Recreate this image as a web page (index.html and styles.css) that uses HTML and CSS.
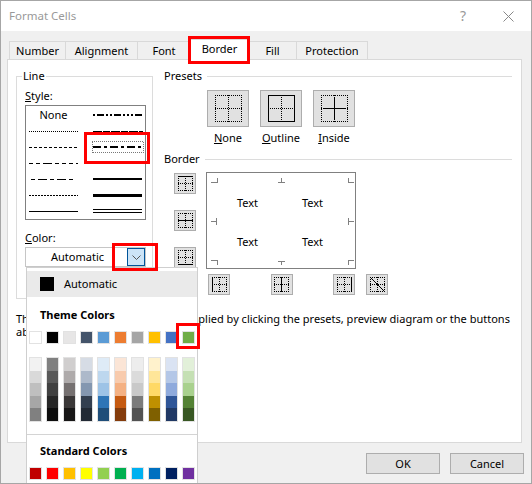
FILE: index.html
```html
<!DOCTYPE html>
<html lang="en">
<head>
<meta charset="utf-8">
<title>Format Cells</title>
<link rel="stylesheet" href="styles.css">
</head>
<body>
<svg class="defs" width="0" height="0" aria-hidden="true">
  <symbol id="g27" viewBox="0 0 27 27"><path class="dot" d="M0 .5H27M0 26.5H27M.5 0V27M26.5 0V27M13.5 0V27M0 13.5H27"/></symbol>
  <symbol id="g15" viewBox="0 0 15 15"><path class="dot" d="M0 .5H15M0 14.5H15M.5 0V15M14.5 0V15M7.5 0V15M0 7.5H15"/></symbol>
</svg>
<main class="dialog">
  <header class="titlebar">
    <span class="title">Format Cells</span>
    <span class="help">?</span>
    <svg class="close" width="11" height="11" viewBox="0 0 11 11"><path d="M.5 .5L10.5 10.5M10.5 .5L.5 10.5"/></svg>
  </header>
  <nav class="tabs">
    <span class="tab t-number">Number</span>
    <span class="tab t-align">Alignment</span>
    <span class="tab t-font">Font</span>
    <span class="tab t-border active">Border</span>
    <span class="tab t-fill">Fill</span>
    <span class="tab t-prot">Protection</span>
  </nav>
  <section class="panel">
    <div class="columns">
      <fieldset class="line-group">
        <legend>Line</legend>
        <div class="label"><u>S</u>tyle:</div>
        <div class="list">
          <div class="cell none">None</div>
          <svg class="cell" viewBox="0 0 49 16"><path class="l med" stroke-dasharray="2 2 7 2 2 2 2 2 7 2 2 2 2 2" d="M0 8H50"/></svg>
          <svg class="cell" viewBox="0 0 49 16"><path class="l thin d1" d="M0 8.5H49"/></svg>
          <svg class="cell" viewBox="0 0 49 16"><path class="l thick" stroke-dasharray="9 1 7 1" d="M0 9H50"/></svg>
          <svg class="cell" viewBox="0 0 49 16"><path class="l thin" stroke-dasharray="3 2" d="M0 8.5H49"/></svg>
          <svg class="cell" viewBox="0 0 49 16"><path class="l med" stroke-dasharray="8 3 3 3" d="M0 8H50"/><path class="focus" d="M-1 2.5H50.5V13.5H-1Z"/></svg>
          <svg class="cell" viewBox="0 0 49 16"><path class="l thin" stroke-dasharray="4 3 4 3 9 3 4 3 4 3" d="M0 8.5H49"/></svg>
          <svg class="cell" viewBox="0 0 49 16"><path class="l med" stroke-dasharray="8 2" d="M0 8H49"/></svg>
          <svg class="cell" viewBox="0 0 49 16"><path class="l thin" stroke-dasharray="0 2 4 3 9 3 4 3 9 3 4 3" d="M0 8.5H49"/></svg>
          <svg class="cell" viewBox="0 0 49 16"><path class="l med" d="M0 8H49"/></svg>
          <svg class="cell" viewBox="0 0 49 16"><path class="l thin" stroke-dasharray="2 1" d="M0 8.5H49"/></svg>
          <svg class="cell" viewBox="0 0 49 16"><path class="l thick" d="M0 8.5H49"/></svg>
          <svg class="cell" viewBox="0 0 49 16"><path class="l thin" d="M0 8.5H49"/></svg>
          <svg class="cell" viewBox="0 0 49 16"><path class="l thin" d="M0 6.5H49M0 9.5H49"/></svg>
        </div>
        <div class="label color-label"><u>C</u>olor:</div>
        <div class="combo">
          <span class="combo-text">Automatic</span>
          <span class="combo-btn"><svg width="9" height="5" viewBox="0 0 9 5"><path d="M.5 .5L4.5 4.5L8.5 .5"/></svg></span>
        </div>
      </fieldset>
      <div class="right">
        <div class="head"><span>Presets</span><i></i></div>
        <div class="presets">
          <div class="preset">
            <span class="pbtn"><svg width="27" height="27"><use href="#g27"/></svg></span>
            <span class="plabel"><u>N</u>one</span>
          </div>
          <div class="preset">
            <span class="pbtn"><svg width="27" height="27"><use href="#g27"/><path class="solid" d="M.5 .5H26.5V26.5H.5Z"/></svg></span>
            <span class="plabel"><u>O</u>utline</span>
          </div>
          <div class="preset">
            <span class="pbtn"><svg width="27" height="27"><use href="#g27"/><path class="solid" d="M13.5 2V25M2 13.5H25"/></svg></span>
            <span class="plabel"><u>I</u>nside</span>
          </div>
        </div>
        <div class="head border-head"><span>Border</span><i></i></div>
        <div class="border-area">
          <div class="side">
            <span class="bbtn"><svg width="15" height="15"><use href="#g15"/><path class="solid" d="M0 .5H15"/></svg></span>
            <span class="bbtn"><svg width="15" height="15"><use href="#g15"/><path class="solid" d="M0 7.5H15"/></svg></span>
            <span class="bbtn"><svg width="15" height="15"><use href="#g15"/><path class="solid" d="M0 14.5H15"/></svg></span>
          </div>
          <div class="main">
            <div class="preview">
              <svg class="ticks" width="148" height="95" viewBox="0 0 148 95"><path d="M4 9.5H10.5V5M71 9.5H78M74.5 9.5V5M141.5 5V9.5H147M4 48.5H10M9.5 45V52M141.5 45V52M141.5 48.5H147M4 87.5H10.5V92M71 88.5H78M74.5 88.5V92M147 87.5H141.5V92"/></svg>
              <span>Text</span><span>Text</span><span>Text</span><span>Text</span>
            </div>
            <div class="bottom">
              <div class="bottom-three">
                <span class="bbtn"><svg width="15" height="15"><use href="#g15"/><path class="solid" d="M.5 0V15"/></svg></span>
                <span class="bbtn"><svg width="15" height="15"><use href="#g15"/><path class="solid" d="M7.5 0V15"/></svg></span>
                <span class="bbtn"><svg width="15" height="15"><use href="#g15"/><path class="solid" d="M14.5 0V15"/></svg></span>
              </div>
              <span class="bbtn"><svg width="15" height="15"><use href="#g15"/><path class="solid diag" d="M1 1L14 14"/></svg></span>
            </div>
          </div>
        </div>
      </div>
    </div>
    <p class="hint">The selected border style can be applied by clicking the presets, preview diagram or the buttons above.</p>
  </section>
  <footer class="footer">
    <span class="btn">OK</span>
    <span class="btn">Cancel</span>
  </footer>

  <div class="popup">
    <div class="auto"><i></i><span>Automatic</span></div>
    <div class="pop-head theme-head">Theme Colors</div>
    <div class="swatches">
      <i style="background:#ffffff"></i><i style="background:#000000"></i><i style="background:#e7e6e6"></i><i style="background:#44546a"></i><i style="background:#5b9bd5"></i><i style="background:#ed7d31"></i><i style="background:#a5a5a5"></i><i style="background:#ffc000"></i><i style="background:#4472c4"></i><i style="background:#70ad47"></i>
    </div>
    <div class="shades">
      <div><i style="background:#f2f2f2"></i><i style="background:#d9d9d9"></i><i style="background:#bfbfbf"></i><i style="background:#a6a6a6"></i><i style="background:#808080"></i></div>
      <div><i style="background:#808080"></i><i style="background:#595959"></i><i style="background:#404040"></i><i style="background:#262626"></i><i style="background:#0d0d0d"></i></div>
      <div><i style="background:#d0cece"></i><i style="background:#afabab"></i><i style="background:#767171"></i><i style="background:#3b3838"></i><i style="background:#181717"></i></div>
      <div><i style="background:#d6dce5"></i><i style="background:#adb9ca"></i><i style="background:#8497b0"></i><i style="background:#333f50"></i><i style="background:#222a35"></i></div>
      <div><i style="background:#deebf7"></i><i style="background:#bdd7ee"></i><i style="background:#9dc3e6"></i><i style="background:#2e75b6"></i><i style="background:#1f4e79"></i></div>
      <div><i style="background:#fbe5d6"></i><i style="background:#f8cbad"></i><i style="background:#f4b183"></i><i style="background:#c55a11"></i><i style="background:#843c0c"></i></div>
      <div><i style="background:#ededed"></i><i style="background:#dbdbdb"></i><i style="background:#c9c9c9"></i><i style="background:#7b7b7b"></i><i style="background:#525252"></i></div>
      <div><i style="background:#fff2cc"></i><i style="background:#ffe699"></i><i style="background:#ffd966"></i><i style="background:#bf9000"></i><i style="background:#7f6000"></i></div>
      <div><i style="background:#dae3f3"></i><i style="background:#b4c7e7"></i><i style="background:#8faadc"></i><i style="background:#2f5597"></i><i style="background:#203864"></i></div>
      <div><i style="background:#e2f0d9"></i><i style="background:#c5e0b4"></i><i style="background:#a9d18e"></i><i style="background:#548235"></i><i style="background:#385723"></i></div>
    </div>
    <hr class="sep">
    <div class="pop-head std-head">Standard Colors</div>
    <div class="swatches">
      <i style="background:#c00000"></i><i style="background:#ff0000"></i><i style="background:#ffc000"></i><i style="background:#ffff00"></i><i style="background:#92d050"></i><i style="background:#00b050"></i><i style="background:#00b0f0"></i><i style="background:#0070c0"></i><i style="background:#002060"></i><i style="background:#7030a0"></i>
    </div>
  </div>

  <div class="mark m-tab"></div>
  <div class="mark m-style"></div>
  <div class="mark m-drop"></div>
  <div class="mark m-green"></div>
</main>
</body>
</html>
```

FILE: styles.css
```css
* { box-sizing: border-box; }
html, body { margin: 0; padding: 0; }
body {
  width: 532px;
  height: 484px;
  overflow: hidden;
  font-family: "Noto Sans", "Liberation Sans", sans-serif;
  font-size: 11px;
  line-height: 16px;
  color: #000;
  background: #f0f0f0;
}
.defs { position: absolute; }
.dot { fill: none; stroke: #000; stroke-width: 1; stroke-dasharray: 1 1; shape-rendering: crispEdges; }
.solid { fill: none; stroke: #000; stroke-width: 1; shape-rendering: crispEdges; }
.solid.diag { shape-rendering: auto; }

.dialog {
  position: relative;
  width: 532px;
  height: 484px;
  border: 1px solid #a6a6a6;
  background: #f0f0f0;
  overflow: hidden;
}

.titlebar {
  height: 30px;
  background: #fff;
  display: flex;
  align-items: center;
  padding: 0 17px 0 8px;
}
.title { font-size: 11.5px; color: #999; flex: 1; }
.help { font-size: 14px; color: #999; margin-right: 37px; }
.close path { fill: none; stroke: #888; stroke-width: 1; }

.tabs {
  height: 28px;
  display: flex;
  align-items: flex-end;
  padding-left: 8px;
}
.tab {
  height: 18px;
  display: flex;
  align-items: center;
  justify-content: center;
  border: 1px solid #d9d9d9;
  border-bottom: 0;
  border-left: 0;
  background: #f0f0f0;
}
.tab.t-number { border-left: 1px solid #d9d9d9; }
.t-number { width: 57px; }
.t-align { width: 72px; }
.t-font { width: 53px; }
.t-border { width: 58px; }
.t-fill { width: 48px; }
.t-prot { width: 71px; }
.tab.active {
  height: 21px;
  background: #fff;
  position: relative;
  z-index: 1;
  margin-bottom: -1px;
  padding-bottom: 2px;
}

.panel {
  margin: 0 9px 0 6px;
  height: 384px;
  background: #fff;
  border: 1px solid #d9d9d9;
  padding: 9px 0 0 8px;
}
.columns { display: flex; gap: 11px; }

.line-group {
  width: 137px;
  height: 230px;
  margin: 0;
  padding: 0 0 0 8px;
  border: 1px solid #dcdcdc;
  min-width: 0;
}
.line-group legend {
  padding: 0 1px;
  margin-left: -3px;
  line-height: 14px;
}
.label { height: 16px; margin-top: 5px; }
.list {
  width: 121px;
  height: 115px;
  margin-top: 1px;
  border: 1px solid #808080;
  padding: 1px 0 0 3px;
  display: grid;
  grid-template-columns: 49px 49px;
  grid-auto-rows: 16px;
  column-gap: 15px;
}
.cell { width: 49px; height: 16px; overflow: visible; display: block; }
.none { text-align: center; line-height: 16px; }
.l { fill: none; stroke: #000; shape-rendering: crispEdges; }
.thin { stroke-width: 1; }
.med { stroke-width: 2; }
.thick { stroke-width: 3; }
.d1 { stroke-dasharray: 1 1; }
.focus { fill: none; stroke: #777; stroke-width: 1; stroke-dasharray: 1 1; shape-rendering: crispEdges; }
.color-label { margin-top: 10px; }
.combo {
  width: 121px;
  height: 20px;
  margin-top: 1px;
  border: 1px solid #c6c6c6;
  display: flex;
  align-items: center;
  justify-content: flex-end;
  padding-right: 0;
}
.combo-text { flex: 1; padding-left: 25px; }
.combo-btn {
  width: 18px;
  height: 18px;
  background: #cce4f7;
  border: 1px solid #005499;
  display: flex;
  align-items: center;
  justify-content: center;
}
.combo-btn path { fill: none; stroke: #555; stroke-width: 1; }

.right { width: 348px; }
.head { display: flex; align-items: center; gap: 5px; height: 14px; }
.head i { flex: 1; height: 1px; background: #dcdcdc; }
.presets { display: flex; gap: 11px; margin: 7px 0 0 43px; }
.preset { width: 42px; display: flex; flex-direction: column; align-items: center; }
.pbtn {
  width: 42px;
  height: 37px;
  background: #e1e1e1;
  border: 1px solid #adadad;
  display: flex;
  align-items: center;
  justify-content: center;
}
.pbtn svg, .bbtn svg { display: block; }
.plabel { height: 16px; margin-top: 3px; }
.border-head { margin-top: 6px; }
.border-area { display: flex; margin: 6px 0 0 10px; gap: 10px; }
.side { width: 22px; display: flex; flex-direction: column; gap: 16px; padding-top: 1px; }
.bbtn {
  width: 22px;
  height: 21px;
  flex: none;
  background: #e1e1e1;
  border: 1px solid #adadad;
  display: flex;
  align-items: center;
  justify-content: center;
}
.preview {
  position: relative;
  width: 150px;
  height: 97px;
  border: 1px solid #808080;
  padding: 10px 8px 0 8px;
  display: grid;
  grid-template-columns: 65px 65px;
  grid-auto-rows: 39px;
  align-items: center;
  justify-items: center;
  align-content: start;
}
.ticks { position: absolute; left: 0; top: 0; }
.ticks path { fill: none; stroke: #808080; stroke-width: 1; shape-rendering: crispEdges; }
.bottom { display: flex; margin: 5px 0 0 2px; gap: 11px; }
.bottom-three { width: 147px; display: flex; justify-content: space-between; }

.hint { margin: 13px 0 0; width: 505px; line-height: 13px; }

.footer {
  display: flex;
  justify-content: flex-end;
  gap: 10px;
  padding: 10px 7px 0 0;
}
.btn {
  width: 74px;
  height: 21px;
  background: #e1e1e1;
  border: 1px solid #adadad;
  display: flex;
  align-items: center;
  justify-content: center;
}

.popup {
  position: absolute;
  left: 25px;
  top: 266px;
  width: 172px;
  height: 217px;
  background: #fff;
  border: 1px solid #cfcfcf;
  padding-top: 3px;
}
.auto {
  height: 26px;
  background: #eaeaea;
  display: flex;
  align-items: center;
  gap: 10px;
  padding-left: 13px;
}
.auto i { width: 14px; height: 14px; background: #000; }
.pop-head { font-weight: 700; height: 16px; padding-left: 13px; }
.theme-head { margin-top: 10px; }
.swatches { display: flex; gap: 4px; padding-left: 2px; margin-top: 8px; }
.swatches i { width: 13px; height: 13px; border: 1px solid #e2e2e2; display: block; }
.shades { display: flex; gap: 4px; padding-left: 2px; margin-top: 13px; }
.shades div { width: 13px; height: 65px; border: 1px solid #e2e2e2; display: flex; flex-direction: column; }
.shades i { flex: 1; display: block; }
.sep { border: 0; height: 1px; margin: 12px 0 0; background: #d4d4d4; }
.std-head { margin-top: 8px; }

.mark { position: absolute; border: 3px solid #f00; z-index: 5; }
.m-tab { left: 187px; top: 35px; width: 62px; height: 28px; }
.m-style { left: 83px; top: 131px; width: 66px; height: 32px; }
.m-drop { left: 111px; top: 242px; width: 46px; height: 28px; }
.m-green { left: 175px; top: 322px; width: 24px; height: 26px; }
```
